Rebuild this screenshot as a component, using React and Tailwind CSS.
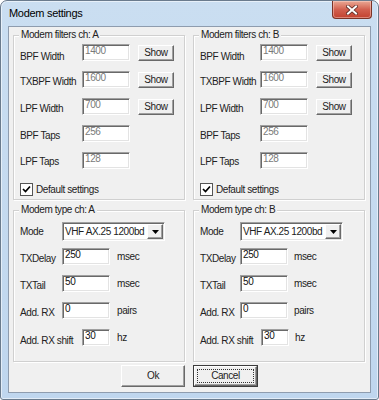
import React from 'react';

const sunken =
  'bg-white border border-t-[#a0a0a0] border-l-[#a0a0a0] border-b-white border-r-white shadow-[inset_1px_1px_0_#696969,inset_-1px_-1px_0_#e3e3e3]';
const raised =
  'bg-[#f0f0f0] border border-t-white border-l-white border-b-[#696969] border-r-[#696969] shadow-[inset_-1px_-1px_0_#a0a0a0]';

function Edit({ value, w, gray }) {
  return (
    <div className={`h-[17px] ${w} ${sunken} pl-[2px] leading-[12px] ${gray ? 'text-[#7a7a7a]' : 'text-[#111]'}`}>
      {value}
    </div>
  );
}

function Group({ title, h, children }) {
  return (
    <div className={`w-[172px] ${h} border border-[#d0d0d0] shadow-[1px_1px_0_#fff,inset_1px_1px_0_#fff]`}>
      <div className="-mt-[7px] ml-[5px] w-fit bg-[#f0f0f0] px-[2px] leading-[12px] whitespace-nowrap">{title}</div>
      {children}
    </div>
  );
}

function FilterGroup({ ch, col }) {
  const rows = [
    ['BPF Width', '1400', true, 'pt-[7px]'],
    ['TXBPF Width', '1600', true, 'pt-[5px]'],
    ['LPF Width', '700', true, 'pt-[5px]'],
    ['BPF Taps', '256', false, 'pt-[5px]'],
    ['LPF Taps', '128', false, 'pt-[4px]'],
  ];
  return (
    <Group title={`Modem filters ch: ${ch}`} h="h-[165px]">
      <div className="mt-[3px] flex flex-col">
        {rows.map(([label, value, show, pt]) => (
          <div key={label} className="flex h-[27px] items-start">
            <div className={`${col} pl-[6px] ${pt} leading-[12px] whitespace-nowrap`}>{label}</div>
            <Edit value={value} w="w-[48px]" gray />
            {show && (
              <div className={`ml-[8px] mt-[1px] flex h-[16px] w-[36px] items-center justify-center leading-[12px] ${raised}`}>
                Show
              </div>
            )}
          </div>
        ))}
      </div>
      <div className="mt-[4px] flex items-center pl-[6px]">
        <div className="flex h-[13px] w-[13px] items-center justify-center border border-[#555] bg-white">
          <svg width="11" height="11" viewBox="0 0 11 11">
            <polyline points="2,5 4.5,7.5 9,2.5" fill="none" stroke="#000" strokeWidth="1.7" />
          </svg>
        </div>
        <span className="ml-[3px] leading-[12px]">Default settings</span>
      </div>
    </Group>
  );
}

function TypeGroup({ ch, b }) {
  const col1 = b ? 'w-[46px]' : 'w-[48px]';
  const col2 = b ? 'w-[67px]' : 'w-[68px]';
  const unitMl = b ? 'ml-[6px]' : 'ml-[7px]';
  const rows = [
    ['TXDelay', '250', 'msec'],
    ['TXTail', '50', 'msec'],
    ['Add. RX', '0', 'pairs'],
  ];
  return (
    <Group title={`Modem type ch: ${ch}`} h="h-[152px]">
      <div className="mt-[6px] flex flex-col">
        <div className="flex h-[26px] items-start">
          <div className={`${col1} pl-[6px] pt-[4px] leading-[12px]`}>Mode</div>
          <div className={`flex h-[19px] w-[103px] items-center pl-[2px] pr-[1px] ${sunken}`}>
            <span className="flex-1 leading-[12px] whitespace-nowrap">VHF AX.25 1200bd</span>
            <div className={`flex h-[15px] w-[16px] items-center justify-center ${raised}`}>
              <svg width="7" height="4" viewBox="0 0 7 4">
                <polygon points="0,0 7,0 3.5,4" fill="#000" />
              </svg>
            </div>
          </div>
        </div>
        {rows.map(([label, value, unit]) => (
          <div key={label} className="flex h-[27px] items-start">
            <div className={`${col1} pl-[6px] pt-[5px] leading-[12px] whitespace-nowrap`}>{label}</div>
            <Edit value={value} w="w-[48px]" />
            <span className={`${unitMl} pt-[3px] leading-[12px]`}>{unit}</span>
          </div>
        ))}
        <div className="flex h-[27px] items-start">
          <div className={`${col2} pl-[6px] pt-[6px] leading-[12px] whitespace-nowrap`}>Add. RX shift</div>
          <Edit value="30" w="w-[28px]" />
          <span className={`${unitMl} pt-[3px] leading-[12px]`}>hz</span>
        </div>
      </div>
    </Group>
  );
}

export default function App() {
  return (
    <div className="h-[400px] w-[379px] bg-white font-['Liberation_Sans',Arial,sans-serif] text-[10px] tracking-[-0.4px] text-[#222]">
      <div className="flex h-[400px] w-[379px] flex-col rounded-t-[7px] rounded-b-[3px] border border-[#6a7b8d] bg-gradient-to-b from-[#cadef1] to-[#bfd6ee] shadow-[inset_0_0_0_1px_rgba(255,255,255,0.55)]">
        <div className="flex h-[25px] justify-between">
          <div className="flex items-center pl-[8px] text-[11px] tracking-[-0.3px] text-black">Modem settings</div>
          <div className="mr-[6px] flex h-[18px] w-[40px] items-center justify-center rounded-b-[4px] border border-t-0 border-[#7b3326] bg-gradient-to-b from-[#e9a895] via-[#d2604f] to-[#c2412f] shadow-[inset_0_0_0_1px_rgba(255,220,210,0.45)]">
            <svg width="12" height="10" viewBox="0 0 12 10">
              <path d="M2 1.5 L10 8.5 M10 1.5 L2 8.5" stroke="#5b2a24" strokeWidth="3.6" strokeLinecap="square" />
              <path d="M2 1.5 L10 8.5 M10 1.5 L2 8.5" stroke="#fff" strokeWidth="2" strokeLinecap="square" />
            </svg>
          </div>
        </div>
        <div className="mx-[7px] h-[367px] border border-[#8e9cae] bg-[#f0f0f0] px-[4px] pt-[8px]">
          <div className="flex gap-[8px]">
            <FilterGroup ch="A" col="w-[68px]" />
            <FilterGroup ch="B" col="w-[66px]" />
          </div>
          <div className="mt-[10px] flex gap-[8px]">
            <TypeGroup ch="A" />
            <TypeGroup ch="B" b />
          </div>
          <div className="mt-[3px] flex justify-center gap-[8px]">
            <div className={`flex h-[22px] w-[64px] items-center justify-center leading-[12px] text-[#222] ${raised}`}>Ok</div>
            <div className="h-[22px] w-[65px] border border-[#3c3c3c]">
              <div className={`h-full w-full p-[2px] ${raised}`}>
                <div className="flex h-full w-full items-center justify-center border border-dotted border-[#333] leading-[12px]">
                  Cancel
                </div>
              </div>
            </div>
          </div>
        </div>
      </div>
    </div>
  );
}
